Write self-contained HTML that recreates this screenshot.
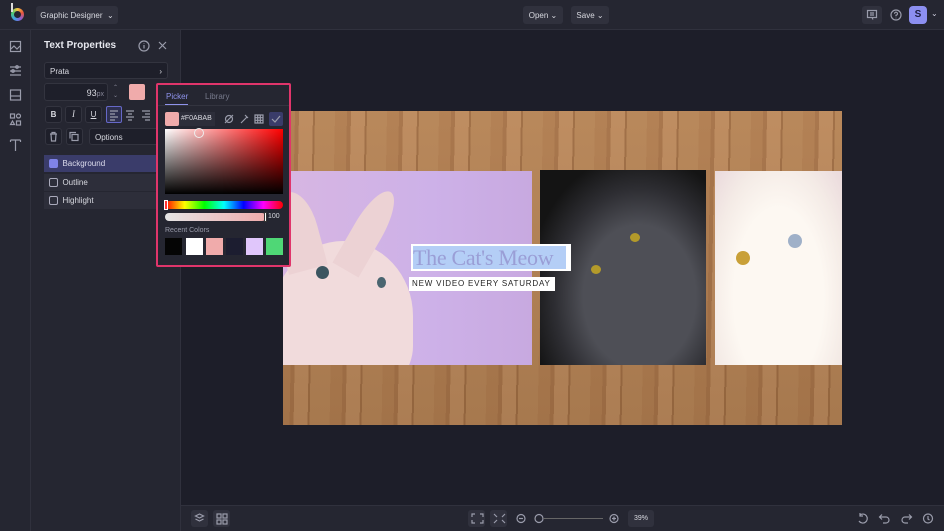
<!DOCTYPE html>
<html><head><meta charset="utf-8"><style>
*{box-sizing:border-box;margin:0;padding:0}
body{width:944px;height:531px;overflow:hidden;background:#1d1e29;font-family:"Liberation Sans",sans-serif;color:#d8d9e0;position:relative;font-size:9px}
.abs{position:absolute}
.top{left:0;top:0;width:944px;height:30px;background:#252631;border-bottom:1px solid #30313d}
.btn{background:#30313d;border-radius:3px;color:#d8d9e0;font-size:8px;display:flex;align-items:center;justify-content:center;white-space:nowrap}
.rail{left:0;top:30px;width:31px;height:501px;background:#252631;border-right:1px solid #30313d}
.panel{left:31px;top:30px;width:150px;height:501px;background:#252631;border-right:1px solid #30313d}
.field{background:#1e1f2a;border:1px solid #33343f;border-radius:3px}
.ico{stroke:#9a9cab;fill:none;stroke-width:1.2}
.bottom{left:181px;top:505px;width:763px;height:26px;background:#252631;border-top:1px solid #30313d}
.chk{width:9px;height:9px;border:1px solid #aab;border-radius:2px;display:inline-block}
</style></head><body>
<div class="abs top"></div>
<div class="abs" style="left:11px;top:8px;width:13px;height:13px;border-radius:50%;background:conic-gradient(#f4c542,#e8553d,#8b5fd6,#3fa0e8,#4ecb71,#f4c542)"></div>
<div class="abs" style="left:14px;top:11px;width:7px;height:7px;border-radius:50%;background:#252631"></div>
<div class="abs" style="left:11px;top:3px;width:2px;height:9px;background:#ddd"></div>
<div class="abs btn" style="left:36px;top:6px;width:82px;height:18px">Graphic Designer &nbsp;⌄</div>
<div class="abs btn" style="left:523px;top:6px;width:40px;height:18px">Open ⌄</div>
<div class="abs btn" style="left:571px;top:6px;width:38px;height:18px">Save ⌄</div>
<div class="abs btn" style="left:862px;top:6px;width:20px;height:18px"><svg width="12" height="12"><rect x="1.5" y="1.5" width="9" height="7" class="ico" stroke="#ccd"/><path d="M4 4h4M4 6h4M6 8.5l1 2" class="ico"/></svg></div>
<div class="abs btn" style="left:886px;top:6px;width:20px;height:18px;background:none"><svg width="12" height="12"><circle cx="6" cy="6" r="5" class="ico" stroke="#ccd"/><path d="M4.5 4.7a1.5 1.5 0 1 1 1.5 1.5v1M6 8.8v.4" class="ico"/></svg></div>
<div class="abs" style="left:909px;top:6px;width:18px;height:18px;border-radius:4px;background:#8c8ff0;color:#1d1e40;font-weight:bold;font-size:10px;text-align:center;line-height:18px">S</div>
<div class="abs" style="left:931px;top:9px;color:#ccd;font-size:8px">⌄</div>

<div class="abs rail"></div>
<svg class="abs" style="left:9px;top:40px" width="14" height="115">
<rect x="1.5" y="1.5" width="10" height="10" class="ico"/><path d="M2 9l3-3 3 3 3-3" class="ico"/>
<path d="M1 27h11M1 31h11M1 35h11" class="ico"/><circle cx="8" cy="27" r="1.3" class="ico"/><circle cx="4" cy="31" r="1.3" class="ico"/>
<rect x="1.5" y="50" width="10" height="10" class="ico"/><path d="M1.5 56h10" class="ico"/>
<rect x="1.5" y="74" width="4" height="4" class="ico"/><circle cx="9.5" cy="76" r="2" class="ico"/><path d="M3.5 81l2 3.5h-4z" class="ico"/><rect x="7.5" y="81" width="4" height="4" class="ico"/>
<path d="M1.5 100h10M6.5 100v11M1.5 100v2M11.5 100v2" class="ico"/>
</svg>

<div class="abs panel"></div>
<div class="abs" style="left:44px;top:40px;font-size:10px;font-weight:bold;color:#e6e7ee">Text Properties</div>
<svg class="abs" style="left:138px;top:40px" width="30" height="12"><circle cx="6" cy="6" r="5" class="ico" stroke="#ccd"/><path d="M6 5v3.5M6 3.3v.4" class="ico" stroke="#ccd"/><path d="M21 2l7 7M28 2l-7 7" class="ico" stroke="#ccd"/></svg>
<div class="abs field" style="left:44px;top:62px;width:124px;height:17px;padding:4px 5px;font-size:8px">Prata<span style="float:right">›</span></div>
<div class="abs field" style="left:44px;top:83px;width:64px;height:18px;text-align:right;padding:4px 3px;font-size:9px">93<span style="font-size:7px;color:#889">px</span></div>
<div class="abs" style="left:113px;top:84px;color:#889;font-size:6px;line-height:8px">⌃<br>⌄</div>
<div class="abs" style="left:129px;top:84px;width:16px;height:16px;background:#f0abab;border-radius:2px"></div>
<div class="abs field" style="left:45px;top:106px;width:17px;height:17px;text-align:center;line-height:15px;font-weight:bold;font-size:8px">B</div>
<div class="abs field" style="left:65px;top:106px;width:17px;height:17px;text-align:center;line-height:15px;font-style:italic;font-family:'Liberation Serif';font-size:9px">I</div>
<div class="abs field" style="left:85px;top:106px;width:17px;height:17px;text-align:center;line-height:15px;text-decoration:underline;font-size:8px">U</div>
<div class="abs" style="left:106px;top:106px;width:16px;height:17px;border:1px solid #6668c8;background:#2e3050;border-radius:2px"></div>
<svg class="abs" style="left:108px;top:109px" width="46" height="12"><path d="M2 2h8M2 5h5M2 8h8M2 11h5" class="ico" stroke="#aab"/><path d="M18 2h8M20 5h4M18 8h8M20 11h4M34 2h8M37 5h5M34 8h8M37 11h5" class="ico"/></svg>
<div class="abs field" style="left:45px;top:128px;width:17px;height:17px"></div>
<div class="abs field" style="left:66px;top:128px;width:17px;height:17px"></div>
<svg class="abs" style="left:48px;top:131px" width="34" height="11"><path d="M2 3h7M4 3V1.5h3V3M3 3l.5 7h4l.5-7" class="ico"/><rect x="24" y="3.5" width="6" height="6" class="ico"/><path d="M22 7.5V1.5h6" class="ico"/></svg>
<div class="abs field" style="left:89px;top:128px;width:70px;height:17px;padding:4px 5px;font-size:8px">Options</div>
<div class="abs" style="left:44px;top:155px;width:112px;height:17px;background:#3a3c6a;padding:4px 5px;font-size:8px;color:#dde"><span class="chk" style="background:#7f83e8;border-color:#7f83e8;vertical-align:-2px"></span>&nbsp; Background</div>
<div class="abs" style="left:44px;top:174px;width:112px;height:17px;background:#2d2e3a;padding:4px 5px;font-size:8px"><span class="chk" style="vertical-align:-2px"></span>&nbsp; Outline</div>
<div class="abs" style="left:44px;top:192px;width:112px;height:17px;background:#2d2e3a;padding:4px 5px;font-size:8px"><span class="chk" style="vertical-align:-2px"></span>&nbsp; Highlight</div>

<!-- canvas -->
<div class="abs" style="left:283px;top:111px;width:559px;height:314px;background:linear-gradient(0deg,rgba(120,80,45,.25),rgba(200,150,105,.15)),repeating-linear-gradient(91deg,#b07e52 0 12px,#a47249 12px 16px,#bd8c60 16px 30px,#9b6b43 30px 32px,#b68659 32px 52px)"></div>
<div class="abs" style="left:283px;top:171px;width:249px;height:194px;background:linear-gradient(90deg,#d7b6e2,#cdb1e8 60%,#c8a9e0);overflow:hidden">
<div class="abs" style="left:-10px;top:70px;width:140px;height:150px;border-radius:50% 50% 30% 30%;background:#f1dbdc"></div>
<div class="abs" style="left:-5px;top:20px;width:40px;height:80px;background:#ecd2d4;transform:rotate(-15deg);border-radius:50% 50% 0 0"></div>
<div class="abs" style="left:70px;top:15px;width:30px;height:90px;background:#ecd2d4;transform:rotate(30deg);border-radius:50% 50% 0 0"></div>
<div class="abs" style="left:33px;top:95px;width:13px;height:13px;border-radius:50%;background:#3b5560"></div>
<div class="abs" style="left:94px;top:106px;width:9px;height:11px;border-radius:50%;background:#4a6570"></div>
</div>
<div class="abs" style="left:540px;top:170px;width:166px;height:195px;background:radial-gradient(ellipse at 60% 65%,#4e4f56 0 40%,#2e2e33 60%,#141414 80%)"></div>
<div class="abs" style="left:630px;top:233px;width:10px;height:9px;border-radius:50%;background:#b39a2a"></div>
<div class="abs" style="left:591px;top:265px;width:10px;height:9px;border-radius:50%;background:#b39a2a"></div>
<div class="abs" style="left:715px;top:171px;width:127px;height:194px;background:radial-gradient(ellipse at 50% 65%,#fdf8f2 0 50%,#f4ebe6 75%,#ead9dc)"></div>
<div class="abs" style="left:736px;top:251px;width:14px;height:14px;border-radius:50%;background:#c9a038"></div>
<div class="abs" style="left:788px;top:234px;width:14px;height:14px;border-radius:50%;background:#9fb0c8"></div>
<div class="abs" style="left:411px;top:244px;width:160px;height:27px;background:#fff"></div>
<div class="abs" style="left:413px;top:246px;width:153px;height:23px;background:#b4cef6;font-family:'Liberation Serif',serif;font-size:22px;color:#9a9ed6;line-height:23px;white-space:nowrap;letter-spacing:-.3px">The Cat's Meow</div>
<div class="abs" style="left:409px;top:277px;width:146px;height:14px;background:#fff;color:#222;font-size:8px;letter-spacing:.8px;line-height:14px;padding-left:3px;white-space:nowrap;overflow:hidden">NEW VIDEO EVERY SATURDAY</div>

<!-- color picker -->
<div class="abs" style="left:156px;top:83px;width:135px;height:184px;background:#252631;border:2px solid #e0356b;border-radius:2px"></div>
<div class="abs" style="left:166px;top:92px;font-size:8px;color:#8f93ec">Picker</div>
<div class="abs" style="left:165px;top:104px;width:23px;height:1px;background:#8f93ec"></div>
<div class="abs" style="left:205px;top:92px;font-size:8px;color:#777a8c">Library</div>
<div class="abs" style="left:158px;top:105px;width:131px;height:1px;background:#33343f"></div>
<div class="abs" style="left:165px;top:112px;width:14px;height:14px;background:#f0abab;border-radius:2px"></div>
<div class="abs" style="left:179px;top:112px;width:36px;height:14px;background:#2d2e3a;font-size:7px;line-height:14px;padding-left:2px">#F0ABAB</div>
<svg class="abs" style="left:222px;top:112px" width="62" height="14"><circle cx="7" cy="7" r="3.5" class="ico" stroke="#ccd"/><path d="M3 11l8-8M19 11l6-6M23 3l3 3M33 3h8v8h-8zM35.7 3v8M38.3 3v8M33 5.7h8M33 8.3h8" class="ico" stroke="#ccd"/><rect x="47" y="0" width="14" height="14" fill="#3a3c6a" rx="2"/><path d="M50 7l3 3 5-6" class="ico" stroke="#bcc0ff"/></svg>
<div class="abs" style="left:165px;top:129px;width:118px;height:65px;background:linear-gradient(transparent,#000),linear-gradient(90deg,#fff,#f00)"></div>
<div class="abs" style="left:194px;top:128px;width:10px;height:10px;border-radius:50%;border:1.5px solid #eee"></div>
<div class="abs" style="left:165px;top:201px;width:118px;height:8px;border-radius:4px;background:linear-gradient(90deg,#f00,#ff0,#0f0,#0ff,#00f,#f0f,#f00)"></div>
<div class="abs" style="left:164px;top:200px;width:4px;height:10px;border:1px solid #fff;background:#f33"></div>
<div class="abs" style="left:165px;top:213px;width:101px;height:8px;border-radius:4px;background:linear-gradient(90deg,#e5e5e5,#f0abab)"></div>
<div class="abs" style="left:264px;top:212px;width:3px;height:10px;background:#fff;border:1px solid #333"></div>
<div class="abs" style="left:268px;top:213px;font-size:7px">100</div>
<div class="abs" style="left:165px;top:227px;font-size:7px;color:#9a9cab">Recent Colors</div>
<div class="abs" style="left:165px;top:238px;width:17px;height:17px;background:#050505"></div>
<div class="abs" style="left:186px;top:238px;width:17px;height:17px;background:#fff"></div>
<div class="abs" style="left:206px;top:238px;width:17px;height:17px;background:#f0abab"></div>
<div class="abs" style="left:226px;top:238px;width:17px;height:17px;background:#1c1d30"></div>
<div class="abs" style="left:246px;top:238px;width:17px;height:17px;background:#e0c6fb"></div>
<div class="abs" style="left:266px;top:238px;width:17px;height:17px;background:#4fd776"></div>

<!-- bottom bar -->
<div class="abs bottom"></div>
<div class="abs btn" style="left:191px;top:510px;width:17px;height:17px"></div>
<div class="abs btn" style="left:213px;top:510px;width:17px;height:17px"></div>
<div class="abs btn" style="left:468px;top:510px;width:17px;height:17px"></div>
<div class="abs btn" style="left:490px;top:510px;width:17px;height:17px"></div>
<svg class="abs" style="left:191px;top:510px" width="753" height="17">
<path d="M8.5 4l4 2-4 2-4-2zM4.5 9l4 2 4-2" class="ico" stroke="#ccd"/>
<rect x="26" y="4" width="4" height="4" class="ico" stroke="#ccd"/><rect x="32" y="4" width="4" height="4" class="ico" stroke="#ccd"/><rect x="26" y="10" width="4" height="4" class="ico" stroke="#ccd"/><rect x="32" y="10" width="4" height="4" class="ico" stroke="#ccd"/>
<path d="M281 7V4h3M289 4h3v3M292 10v3h-3M284 13h-3v-3" class="ico" stroke="#ccd"/>
<path d="M303 4l3 3M314 4l-3 3M303 13l3-3M314 13l-3-3" class="ico" stroke="#ccd"/>
<circle cx="330" cy="8.5" r="4" class="ico" stroke="#ccd"/><path d="M328 8.5h4" class="ico" stroke="#ccd"/>
<circle cx="348" cy="8.5" r="4" class="ico" stroke="#ccd"/><path d="M343 8.5h1M352 8.5h60" stroke="#666" stroke-width="1"/>
<circle cx="423" cy="8.5" r="4" class="ico" stroke="#ccd"/><path d="M421 8.5h4M423 6.5v4" class="ico" stroke="#ccd"/>
<path d="M669 5a4.5 4.5 0 1 1-1 6M669 3v3h3" class="ico" stroke="#ccd"/>
<path d="M689 7h6a3 3 0 0 1 0 6h-3M691 4.5l-2.5 2.5 2.5 2.5" class="ico" stroke="#ccd"/>
<path d="M720 7h-6a3 3 0 0 0 0 6h3M718 4.5l2.5 2.5-2.5 2.5" class="ico" stroke="#555"/>
<circle cx="737" cy="8.5" r="4.5" class="ico" stroke="#ccd"/><path d="M737 6v3l1.5 1" class="ico" stroke="#ccd"/>
</svg>
<div class="abs btn" style="left:628px;top:510px;width:26px;height:17px;font-size:7px">39%</div>
</body></html>
